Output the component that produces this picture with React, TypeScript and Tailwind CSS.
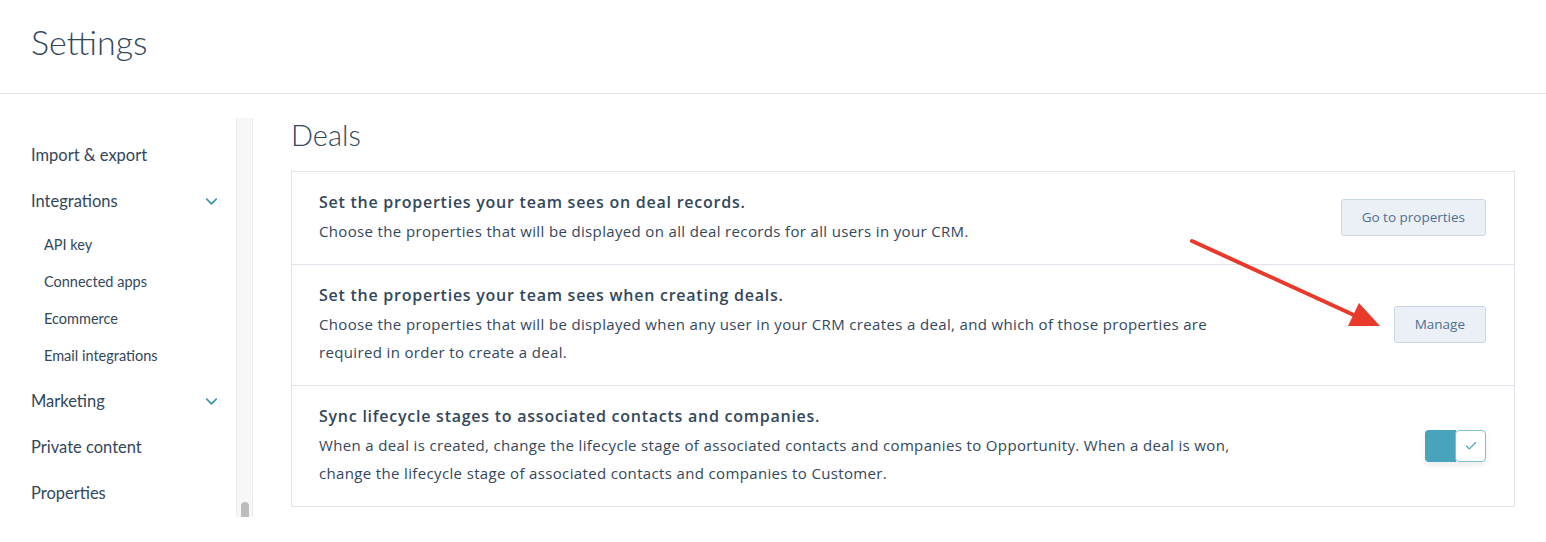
import { Check, ChevronDown } from "lucide-react";

type NavItem = { label: string; chevron?: boolean; children?: string[] };

const navItems: NavItem[] = [
   { label: "Import & export" },
   { label: "Integrations", chevron: true, children: ["API key", "Connected apps", "Ecommerce", "Email integrations"] },
   { label: "Marketing", chevron: true },
   { label: "Private content" },
   { label: "Properties" },
];

const SideNav = (): JSX.Element => (
   <aside className="w-[236px] shrink-0 pt-[38px] pl-[31px] pr-[15px]">
      {navItems.map((item) => (
         <div key={item.label}>
            <div className="h-[46px] flex items-center justify-between text-[16.5px] text-[#33475b]">
               <span>{item.label}</span>
               {item.chevron && <ChevronDown className="w-[19px] h-[19px] text-[#3e97ae]" strokeWidth={2.2} />}
            </div>
            {item.children && (
               <div className="pt-[2px] pb-[4px]">
                  {item.children.map((child) => (
                     <div key={child} className="h-[37px] flex items-center pl-[13px] text-[14.5px] text-[#33475b]">
                        {child}
                     </div>
                  ))}
               </div>
            )}
         </div>
      ))}
   </aside>
);

const ScrollTrack = (): JSX.Element => (
   <div className="w-[17px] shrink-0 mt-[24px] h-[399px] bg-[#f7f7f7] border-l border-r border-[#ececec] flex items-end justify-center">
      <div className="w-[8px] h-[15px] bg-[#bcbcbc] rounded-t-[4px]" />
   </div>
);

const Button = ({ label }: { label: string }): JSX.Element => (
   <button className="h-[37px] px-[20px] bg-[#eaf0f6] border border-[#cbd6e2] rounded-[3px] font-['Open_Sans',sans-serif] text-[13.5px] text-[#506e91]">
      {label}
   </button>
);

const Toggle = (): JSX.Element => (
   <div className="flex h-[32px] w-[61px] shadow-[0_3px_6px_rgba(0,0,0,0.08)] rounded-[4px]">
      <div className="w-[31px] bg-[#48a4bb] rounded-l-[4px]" />
      <div className="w-[31px] -ml-px bg-white border border-[#7dc0d0] rounded-[4px] flex items-center justify-center">
         <Check className="w-[14px] h-[14px] text-[#48a4bb]" strokeWidth={2} />
      </div>
   </div>
);

const rows = [
   {
      title: "Set the properties your team sees on deal records.",
      desc: "Choose the properties that will be displayed on all deal records for all users in your CRM.",
      action: <Button label="Go to properties" />,
   },
   {
      title: "Set the properties your team sees when creating deals.",
      desc: "Choose the properties that will be displayed when any user in your CRM creates a deal, and which of those properties are required in order to create a deal.",
      action: <Button label="Manage" />,
   },
   {
      title: "Sync lifecycle stages to associated contacts and companies.",
      desc: "When a deal is created, change the lifecycle stage of associated contacts and companies to Opportunity. When a deal is won, change the lifecycle stage of associated contacts and companies to Customer.",
      action: <Toggle />,
   },
];

export default function App() {
   return (
      <div className="relative w-[1546px] h-[542px] bg-white font-['Lato',sans-serif] overflow-hidden">
         <header className="h-[94px] border-b border-[#dfe3eb] pl-[31px] pt-[20px]">
            <h1 className="text-[34px] leading-[44px] font-light text-[#33475b]">Settings</h1>
         </header>

         <div className="flex">
            <SideNav />
            <ScrollTrack />

            <main className="flex-1 pl-[38px] pr-[31px] pt-[24px]">
               <h2 className="text-[29px] leading-[34px] font-light text-[#33475b] mb-[19px]">Deals</h2>
               <div className="border border-[#dfe3eb] font-['Open_Sans',sans-serif]">
                  {rows.map((row, i) => (
                     <div
                        key={row.title}
                        className={`flex items-center justify-between pl-[27px] pr-[28px] pt-[18px] pb-[19px] ${i > 0 ? "border-t border-[#dfe3eb]" : ""}`}>
                        <div className="max-w-[935px] text-[#33475b]">
                           <p className="text-[16px] leading-[24px] font-semibold tracking-[0.75px]">{row.title}</p>
                           <p className="mt-[3px] text-[15px] leading-[28px] tracking-[0.35px]">{row.desc}</p>
                        </div>
                        {row.action}
                     </div>
                  ))}
               </div>
            </main>
         </div>

         {/* red annotation arrow */}
         <svg className="absolute left-0 top-0 pointer-events-none" width="1546" height="542">
            <line x1="1192" y1="241" x2="1356" y2="316" stroke="#e8392b" strokeWidth="4" strokeLinecap="round" />
            <polygon points="1380,326 1348,326 1359,303" fill="#e8392b" />
         </svg>
      </div>
   );
}
